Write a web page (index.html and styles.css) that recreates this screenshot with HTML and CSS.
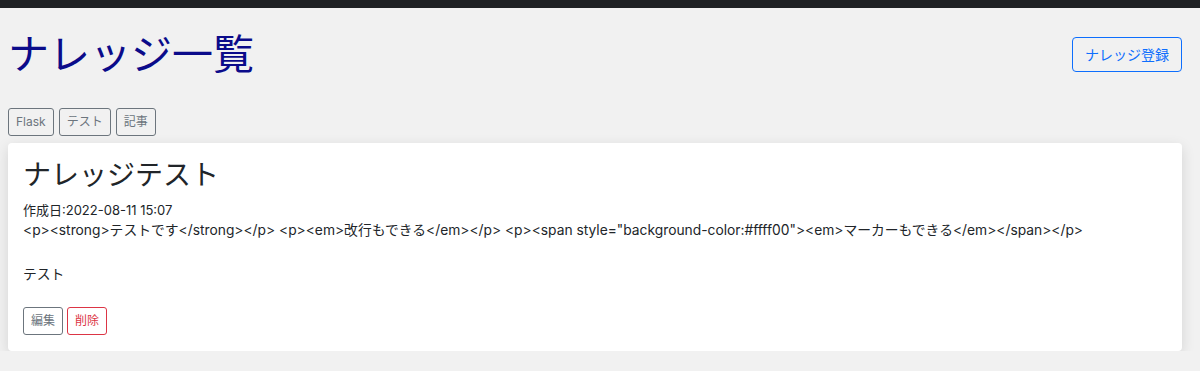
FILE: index.html
```html
<!DOCTYPE html>
<html lang="ja">
<head>
    <meta charset="UTF-8">
    <title>ナレッジ一覧</title>
    <link rel="stylesheet" href="styles.css">
</head>
<body>
<div class="topbar"></div>

<main class="page">

    <div class="page__header">
        <h1 class="page__title">ナレッジ一覧</h1>
        <a href="#" class="btn btn--primary">ナレッジ登録</a>
    </div>

    <div class="tags">
        <button class="btn btn--sm btn--gray" type="button">Flask</button>
        <button class="btn btn--sm btn--gray" type="button">テスト</button>
        <button class="btn btn--sm btn--gray" type="button">記事</button>
    </div>

    <div class="card">
        <h2 class="card__title">ナレッジテスト</h2>
        <div class="card__date">作成日:2022-08-11 15:07</div>
        <div class="card__text">
            &lt;p&gt;&lt;strong&gt;テストです&lt;/strong&gt;&lt;/p&gt; &lt;p&gt;&lt;em&gt;改行もできる&lt;/em&gt;&lt;/p&gt; &lt;p&gt;&lt;span style="background-color:#ffff00"&gt;&lt;em&gt;マーカーもできる&lt;/em&gt;&lt;/span&gt;&lt;/p&gt;<br>
            <br>
            テスト
        </div>
        <div class="card__actions">
            <button class="btn btn--sm btn--gray" type="button">編集</button>
            <button class="btn btn--sm btn--danger" type="button">削除</button>
        </div>
    </div>

</main>
</body>
</html>
```

FILE: styles.css
```css
html {
    height: 100%;
}

body {
    margin: 0;
    background-color: #f1f1f1;
    color: #212529;
    font-family: Inter, "Noto Sans CJK JP", sans-serif;
}

.topbar {
    height: 8px;
    background-color: #1f2124;
}

.page {
    padding: 0 18px 0 8px;
}

.page__header {
    display: flex;
    justify-content: space-between;
    align-items: center;
    padding-top: 22px;
}
.page__title {
    margin: 0;
    font-size: 41px;
    font-weight: 400;
    line-height: 48px;
    color: #0b0b8a;
}

.btn {
    display: inline-block;
    box-sizing: border-box;
    padding: 6px 12px;
    font-family: inherit;
    font-size: 14px;
    line-height: 21px;
    text-decoration: none;
    background-color: transparent;
    border: 1px solid;
    border-radius: 4px;
    cursor: pointer;
}
.btn--primary {
    color: #0d6efd;
    border-color: #0d6efd;
}
.btn--sm {
    padding: 4px 7px;
    font-size: 12px;
    line-height: 18px;
    border-radius: 3px;
}
.btn--gray {
    color: #6c757d;
    border-color: #6c757d;
}
.btn--danger {
    color: #dc3545;
    border-color: #dc3545;
}

.tags {
    display: flex;
    gap: 5px;
    margin-top: 30px;
}

.card {
    margin-top: 7px;
    padding: 14px 15px 16px;
    background-color: #fff;
    border-radius: 4px;
    box-shadow: 0 4px 14px rgba(0, 0, 0, .12);
}
.card__title {
    margin: 0;
    font-size: 28px;
    font-weight: 400;
    line-height: 36px;
}
.card__date {
    margin-top: 8px;
    font-size: 13px;
    line-height: 18px;
}
.card__text {
    font-size: 13.8px;
    line-height: 22px;
}
.card__actions {
    display: flex;
    gap: 4px;
    margin-top: 22px;
}
```
